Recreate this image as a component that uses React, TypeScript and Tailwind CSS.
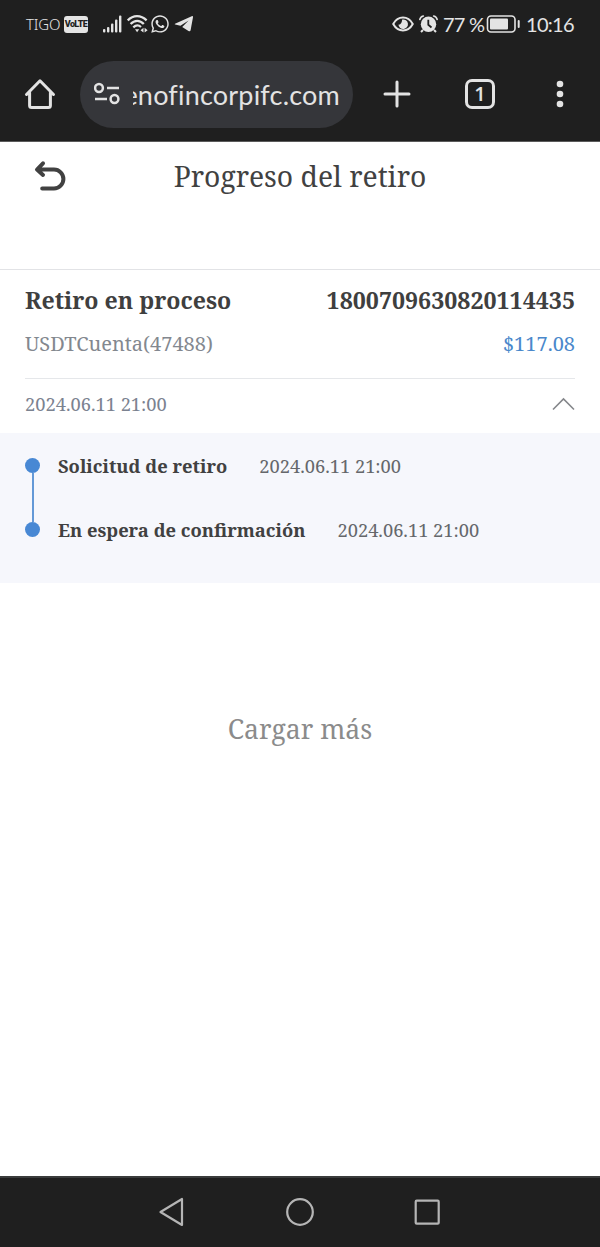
import React from "react";
import { FaWhatsapp } from "react-icons/fa";

const serif = "font-['Noto_Serif','DejaVu_Serif_Condensed','DejaVu_Serif',serif]";
const sans = "font-[Lato,'Open_Sans',sans-serif]";

function StatusBar() {
  return (
    <div className="flex h-12 items-center pl-[26px] pr-[26px] text-[#e4e4e4]">
      <span className="w-[35px] whitespace-nowrap font-['Noto_Sans',sans-serif] text-[15px] font-light leading-none tracking-[-0.2px]">TIGO</span>
      <span className="ml-[3px] flex h-[17px] w-6 items-center justify-center rounded-[3px] bg-[#e4e4e4] font-[Roboto,sans-serif] text-[9px] font-black leading-none tracking-[-0.6px] text-[#1f1f1f]">VoLTE</span>
      <svg className="ml-[15px] h-[18px] w-[19px]" viewBox="0 0 19 18" fill="currentColor">
        <rect x="0" y="14" width="2.4" height="3.5" rx="1" />
        <rect x="4" y="12" width="2.4" height="5.5" rx="1" />
        <rect x="8" y="8.5" width="2.4" height="9" rx="1" />
        <rect x="12" y="4.5" width="2.4" height="13" rx="1" />
        <rect x="16" y="0.5" width="2.4" height="17" rx="1" />
      </svg>
      <svg className="ml-[5px] h-[18px] w-[21px]" viewBox="0 0 21 18" fill="none" stroke="currentColor" strokeWidth="2.3">
        <path d="M0.8 5.4C6 -0.2 14 -0.2 19.6 5.4M3.6 9C7.6 4.8 12.8 4.8 16.8 9M6.3 12.3C9 9.8 11.6 9.8 14 12" />
        <path d="M8 14.2h4.2l-2.1 3zM16.5 12.8l-3 2.4 3 2.4zM17.6 12.8l3 2.4-3 2.4z" fill="currentColor" stroke="none" />
      </svg>
      <FaWhatsapp className="ml-[2px] h-5 w-[20px]" />
      <svg className="ml-[4px] h-[18px] w-[20px]" viewBox="0 0 20 18" fill="currentColor">
        <path d="M1 8.7L17.7 1.2Q19.2 0.7 19 2.2L16.6 15.2Q16.2 17 14.5 16L8.2 11.9L14.6 5.4L6.4 10.8L1.2 9.6Q0.3 9.2 1 8.7Z" />
      </svg>
      <svg className="ml-auto h-4 w-[22px]" viewBox="0 0 22 16" fill="none" stroke="currentColor" strokeWidth="2">
        <path d="M1.2 8C6 -0.6 16 -0.6 20.8 8C16 16.6 6 16.6 1.2 8Z" strokeLinejoin="round" />
        <path d="M10.2 3.5A4.8 4.8 0 1 1 6.4 8.6Q9.5 9.2 10.2 3.5Z" fill="currentColor" stroke="none" />
      </svg>
      <svg className="ml-[5px] h-[18px] w-[19px]" viewBox="0 0 19 18" fill="none" stroke="currentColor">
        <circle cx="9.5" cy="9.3" r="7.7" fill="currentColor" stroke="none" />
        <path d="M0.9 4.4Q1.4 1.8 4.3 1M14.7 1Q17.6 1.8 18.1 4.4" strokeWidth="1.7" strokeLinecap="round" />
        <path d="M4 15l-2 2M15 15l2 2" strokeWidth="2" />
        <path d="M9.3 4.8v5l3.2 2.7" stroke="#1f1f1f" strokeWidth="1.8" />
      </svg>
      <span className={`ml-[5px] w-[42px] whitespace-nowrap text-[20px] leading-none ${sans} tracking-[-0.8px]`}>77 %</span>
      <svg className="ml-[1px] h-[18px] w-[34px]" viewBox="0 0 34 18" fill="currentColor">
        <rect x="1.5" y="1" width="27.5" height="16" rx="3.5" fill="none" stroke="currentColor" strokeWidth="1.6" />
        <rect x="4" y="3.5" width="18" height="11" rx="1" />
        <rect x="31.7" y="5" width="2" height="8" rx="1" />
      </svg>
      <span className={`ml-[6px] w-[48px] whitespace-nowrap text-[20px] leading-none ${sans} tracking-[-0.7px]`}>10:16</span>
    </div>
  );
}

function BrowserBar() {
  return (
    <div className="flex h-[93px] items-center pb-[1px] text-[#e3e3e3]">
      <svg className="ml-[24px] h-8 w-8" viewBox="0 0 32 32" fill="none" stroke="currentColor" strokeWidth="3" strokeLinecap="round" strokeLinejoin="round">
        <path d="M2.5 16.5L16 2.8L29.5 16.5M5.6 14.5V27.5Q5.6 29.5 7.6 29.5H24.4Q26.4 29.5 26.4 27.5V14.5" />
      </svg>
      <div className="ml-[24px] flex h-[67px] w-[273px] items-center rounded-full bg-[#35363a]">
        <svg className="ml-[14px] h-6 w-[26px]" viewBox="0 0 26 24" fill="none" stroke="currentColor" strokeWidth="2.5">
          <circle cx="5" cy="6" r="3.9" />
          <path d="M13 6H25M1 17H13" />
          <circle cx="20.5" cy="17" r="3.9" />
        </svg>
        <div className="ml-[13px] flex w-[207px] justify-end overflow-hidden whitespace-nowrap pt-[2px]">
          <span className={`text-[27px] leading-[38px] tracking-[0.2px] [font-variant-ligatures:none] ${sans}`}>enofincorpifc.com</span>
        </div>
      </div>
      <svg className="ml-[30px] h-[28px] w-[28px]" viewBox="0 0 28 28" stroke="currentColor" strokeWidth="3" strokeLinecap="round">
        <path d="M14 2V26M2 14H26" />
      </svg>
      <div className="ml-[54px] flex h-[30px] w-[30px] items-center justify-center rounded-[7px] border-[3px] border-[#e3e3e3] font-['Open_Sans',sans-serif] text-[20px] font-semibold leading-none">1</div>
      <svg className="ml-[61px] h-[28px] w-2" viewBox="0 0 8 28" fill="currentColor">
        <circle cx="4" cy="4" r="3.3" />
        <circle cx="4" cy="14" r="3.3" />
        <circle cx="4" cy="24" r="3.3" />
      </svg>
    </div>
  );
}

function PageHeader() {
  return (
    <div className="flex h-[128px] items-start border-b border-[#e2e3e6] text-[#414141]">
      <svg className="ml-[34px] mt-[18px] h-8 w-8 shrink-0" viewBox="0 0 32 32" fill="none" stroke="currentColor" strokeWidth="4" strokeLinecap="round" strokeLinejoin="round">
        <path d="M9 3.3L3 9.6L9 15M3.5 9.6H20A9.4 9.4 0 0 1 20 28.4H8.2" />
      </svg>
      <h1 className="mr-[66px] flex-1 whitespace-nowrap pt-[14px] text-center text-[28.3px] leading-[40px]">Progreso del retiro</h1>
    </div>
  );
}

function Step({ label, time }: { label: string; time: string }) {
  return (
    <li className="flex h-[63.5px] items-start whitespace-nowrap leading-7">
      <span className="text-[18.35px] font-bold text-[#414141]">{label}</span>
      <span className="ml-8 text-[18.3px] text-[#65676b]">{time}</span>
    </li>
  );
}

export default function App() {
  return (
    <div className={`flex h-[1247px] w-[600px] flex-col bg-white ${serif}`}>
      <header className="h-[142px] border-b border-[#5b5b5b] bg-[#1f1f1f]">
        <StatusBar />
        <BrowserBar />
      </header>
      <PageHeader />
      <main className="flex-1">
        <section className="mx-[25px] h-[109px] border-b border-[#e5e7ea] whitespace-nowrap">
          <div className="flex justify-between pt-[14px] text-[23.15px] font-bold leading-8 text-[#3f3f3f]">
            <span>Retiro en proceso</span>
            <span>1800709630820114435</span>
          </div>
          <div className="flex justify-between pt-[12px] text-[20px] leading-8 text-[#83888f]">
            <span>USDTCuenta(47488)</span>
            <span className="text-[#4a88cb]">$117.08</span>
          </div>
        </section>
        <div className="mx-[25px] flex h-[54px] items-center justify-between pb-[4px] text-[18.3px] text-[#7b8290]">
          <span>2024.06.11 21:00</span>
          <svg className="h-[14px] w-[24px]" viewBox="0 0 24 14" fill="none" stroke="#85878b" strokeWidth="1.6">
            <path d="M2 12.5L12.5 2L23 12.5" />
          </svg>
        </div>
        <section className="flex h-[150px] bg-[#f6f7fc]">
          <div className="ml-[25px] mt-[25px] flex h-[78.5px] w-[15px] flex-col items-center">
            <span className="h-[15px] w-[15px] rounded-full bg-[#4888d4]" />
            <span className="w-[2px] flex-1 bg-[#6499d7]" />
            <span className="h-[15px] w-[15px] rounded-full bg-[#4888d4]" />
          </div>
          <ul className="ml-[18px] pt-[19px]">
            <Step label="Solicitud de retiro" time="2024.06.11 21:00" />
            <Step label="En espera de confirmación" time="2024.06.11 21:00" />
          </ul>
        </section>
        <div className="mt-[126px] text-center text-[26.6px] leading-10 text-[#8b8b8b]">Cargar más</div>
      </main>
      <nav className="flex h-[71px] items-center border-t-2 border-[#3a3c3c] bg-[#1f1f1f] pb-[2px] text-[#b5b5b5]">
        <svg className="ml-[158px] h-[30px] w-7" viewBox="0 0 28 30" fill="none" stroke="currentColor" strokeWidth="2.2" strokeLinejoin="round">
          <path d="M24 2V28L2.5 15Z" />
        </svg>
        <svg className="ml-[99px] h-[30px] w-[30px]" viewBox="0 0 30 30" fill="none" stroke="currentColor" strokeWidth="2.2">
          <circle cx="15" cy="15" r="12.8" />
        </svg>
        <svg className="ml-[98px] h-[28px] w-[28px]" viewBox="0 0 28 28" fill="none" stroke="currentColor" strokeWidth="2.2">
          <rect x="2.7" y="2.7" width="23" height="23" rx="1" />
        </svg>
      </nav>
    </div>
  );
}
